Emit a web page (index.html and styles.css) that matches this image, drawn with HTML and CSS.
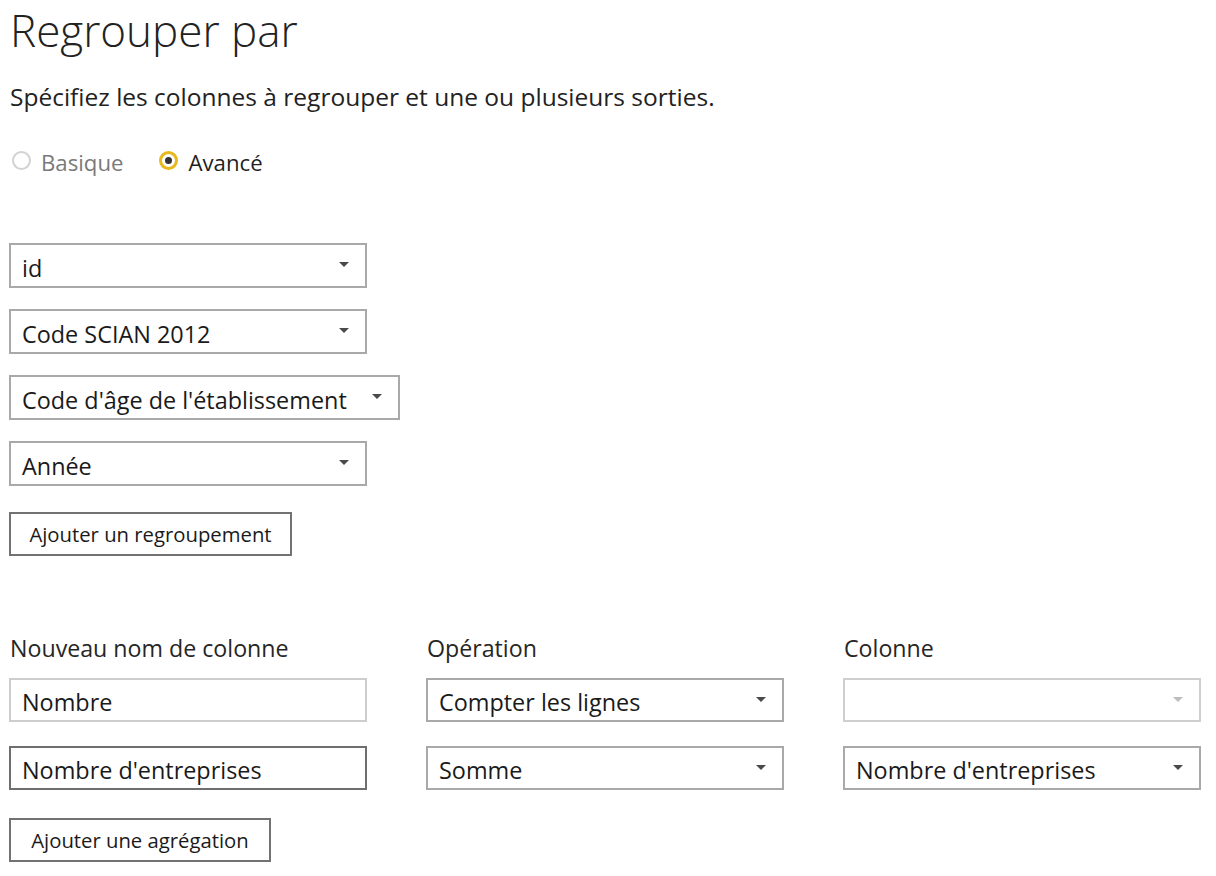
FILE: index.html
```html
<!DOCTYPE html>
<html lang="fr">
<head>
<meta charset="utf-8">
<title>Regrouper par</title>
<link rel="stylesheet" href="styles.css">
</head>
<body>
<div class="dialog">
  <h1 class="title">Regrouper par</h1>
  <p class="subtitle">Spécifiez les colonnes à regrouper et une ou plusieurs sorties.</p>

  <div class="modes">
    <label class="mode mode-off"><span class="radio"></span>Basique</label>
    <label class="mode mode-on"><span class="radio radio-checked"></span>Avancé</label>
  </div>

  <div class="group-list">
    <div class="select w-std"><span class="select-value">id</span><span class="caret"></span></div>
    <div class="select w-std"><span class="select-value">Code SCIAN 2012</span><span class="caret"></span></div>
    <div class="select w-wide"><span class="select-value">Code d'âge de l'établissement</span><span class="caret"></span></div>
    <div class="select w-std"><span class="select-value">Année</span><span class="caret"></span></div>
    <div class="btn btn-group">Ajouter un regroupement</div>
  </div>

  <div class="agg-grid">
    <div class="col-label">Nouveau nom de colonne</div>
    <div class="col-label">Opération</div>
    <div class="col-label">Colonne</div>

    <div class="textbox textbox-idle">Nombre</div>
    <div class="select"><span class="select-value">Compter les lignes</span><span class="caret"></span></div>
    <div class="select select-disabled"><span class="select-value"></span><span class="caret"></span></div>

    <div class="textbox textbox-hover">Nombre d'entreprises</div>
    <div class="select"><span class="select-value">Somme</span><span class="caret"></span></div>
    <div class="select"><span class="select-value">Nombre d'entreprises</span><span class="caret"></span></div>
  </div>

  <div class="btn btn-agg">Ajouter une agrégation</div>
</div>
</body>
</html>
```

FILE: styles.css
```css
html, body {
  margin: 0;
  padding: 0;
  background: #ffffff;
}

body {
  font-family: "Open Sans", "Noto Sans", "Liberation Sans", sans-serif;
  color: #1f1f1f;
  width: 1216px;
  height: 876px;
  overflow: hidden;
}

.dialog {
  padding: 0 0 0 9px;
}

.title {
  margin: 0;
  font-weight: 300;
  font-size: 44px;
  line-height: 60px;
  height: 60px;
  padding-left: 1px;
  color: #222;
  letter-spacing: 0;
}

.subtitle {
  margin: 20px 0 0 1px;
  font-size: 24.5px;
  line-height: 34px;
  color: #222;
}

.modes {
  display: flex;
  align-items: center;
  gap: 33px;
  margin-top: 31px;
  height: 34px;
  font-size: 22.2px;
}

.mode {
  display: flex;
  align-items: center;
  gap: 10px;
}

.mode-off {
  color: #7a7a7a;
}

.mode-on {
  color: #1f1f1f;
}

.radio {
  box-sizing: border-box;
  width: 19px;
  height: 19px;
  border-radius: 50%;
  border: 2px solid #d2d2d2;
  margin-left: 3px;
  margin-top: -4px;
  display: inline-block;
  position: relative;
}

.radio-checked {
  border: 3px solid #e9b81c;
  background: #fff;
}

.radio-checked::after {
  content: "";
  position: absolute;
  left: 3px;
  top: 3px;
  width: 7px;
  height: 7px;
  border-radius: 50%;
  background: #333;
}

.group-list {
  margin-top: 64px;
  display: flex;
  flex-direction: column;
  align-items: flex-start;
  gap: 21px;
}

.select,
.textbox {
  box-sizing: border-box;
  height: 45px;
  border: 2px solid #a9a9a9;
  background: #fff;
  display: flex;
  align-items: center;
  padding: 4px 16px 0 11px;
  font-size: 23.4px;
  color: #1a1a1a;
  white-space: nowrap;
}

.w-std {
  width: 358px;
}

.w-wide {
  width: 391px;
}

.select-value {
  flex: 1;
}

.caret {
  width: 0;
  height: 0;
  border-left: 5px solid transparent;
  border-right: 5px solid transparent;
  border-top: 5px solid #4a4a4a;
  margin-left: 12px;
  margin-top: -6px;
}

.select-disabled {
  border-color: #cfcfcf;
}

.select-disabled .caret {
  border-top-color: #bdbdbd;
}

.textbox-idle {
  border-color: #cdcdcd;
}

.textbox-hover {
  border-color: #6e6e6e;
}

.btn {
  box-sizing: border-box;
  height: 44px;
  border: 2px solid #727272;
  background: #fff;
  display: inline-flex;
  align-items: center;
  justify-content: center;
  font-size: 20.3px;
  color: #1a1a1a;
  white-space: nowrap;
}

.btn-group {
  width: 283px;
  margin-top: 5px;
}

.agg-grid {
  margin-top: 77px;
  display: grid;
  grid-template-columns: 358px 358px 358px;
  column-gap: 59px;
  row-gap: 24px;
}

.col-label {
  font-size: 23.2px;
  line-height: 30px;
  margin-left: 1px;
  color: #262626;
  margin-bottom: -9px;
}

.agg-grid .select,
.agg-grid .textbox {
  height: 44px;
}

.btn-agg {
  width: 262px;
  margin-top: 28px;
}
```
